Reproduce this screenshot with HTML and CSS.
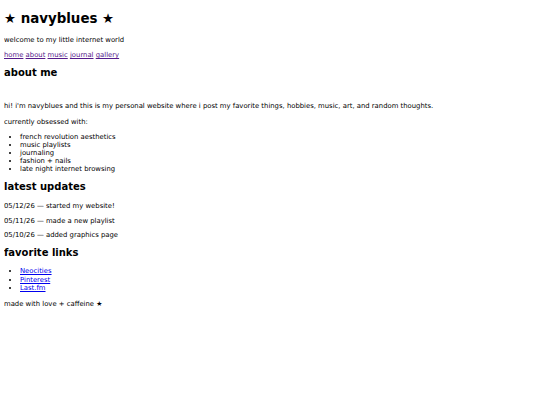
FILE: index.html
```
<!DOCTYPE html>
<html>
<head>
<meta charset="utf-8">
<title>navyblues</title>
<link rel="stylesheet" href="styles.css">
</head>
<body>
<h1 class="title">★ navyblues ★</h1>
<p>welcome to my little internet world</p>
<nav class="nav"><a href="#">home</a> <a href="#">about</a> <a href="#">music</a> <a href="#">journal</a> <a href="#">gallery</a></nav>
<h2>about me</h2>
<div class="spacer"></div>
<p class="intro">hi! i'm navyblues and this is my personal website where i post my favorite things, hobbies, music, art, and random thoughts.</p>
<p>currently obsessed with:</p>
<ul class="obsessed">
<li>french revolution aesthetics</li>
<li>music playlists</li>
<li>journaling</li>
<li>fashion + nails</li>
<li>late night internet browsing</li>
</ul>
<h2>latest updates</h2>
<div class="updates">
<p>05/12/26 — started my website!</p>
<p>05/11/26 — made a new playlist</p>
<p>05/10/26 — added graphics page</p>
</div>
<h2 class="fav">favorite links</h2>
<ul class="links">
<li><a class="link" href="#">Neocities</a></li>
<li><a class="link" href="#">Pinterest</a></li>
<li><a class="link" href="#">Last.fm</a></li>
</ul>
<p class="footer">made with love + caffeine ★</p>
</body>
</html>
```
FILE: styles.css
```
body {
  margin: 4px;
  font-family: "DejaVu Sans", Verdana, sans-serif;
  font-size: 6.85px;
  line-height: 8px;
  color: #000;
  background: #fff;
}
h1 { font-size: 13.4px; line-height: 16px; margin: 7px 0 9px; }
h2 { font-size: 10px; line-height: 12px; margin: 8px 0 9px; }
p { margin: 7px 0; }
.nav { margin: 7px 0; }
.nav a { color: #551a8b; }
.spacer { height: 7px; }
.intro { margin-bottom: 8px; }
ul { margin: 5px 0 7px; padding-left: 16px; }
.updates p { margin: 6.5px 0; }
.fav { margin-bottom: 8px; }
.links { line-height: 8.5px; }
.link { color: #0000ee; }
.footer { margin-top: 6px; }
```
